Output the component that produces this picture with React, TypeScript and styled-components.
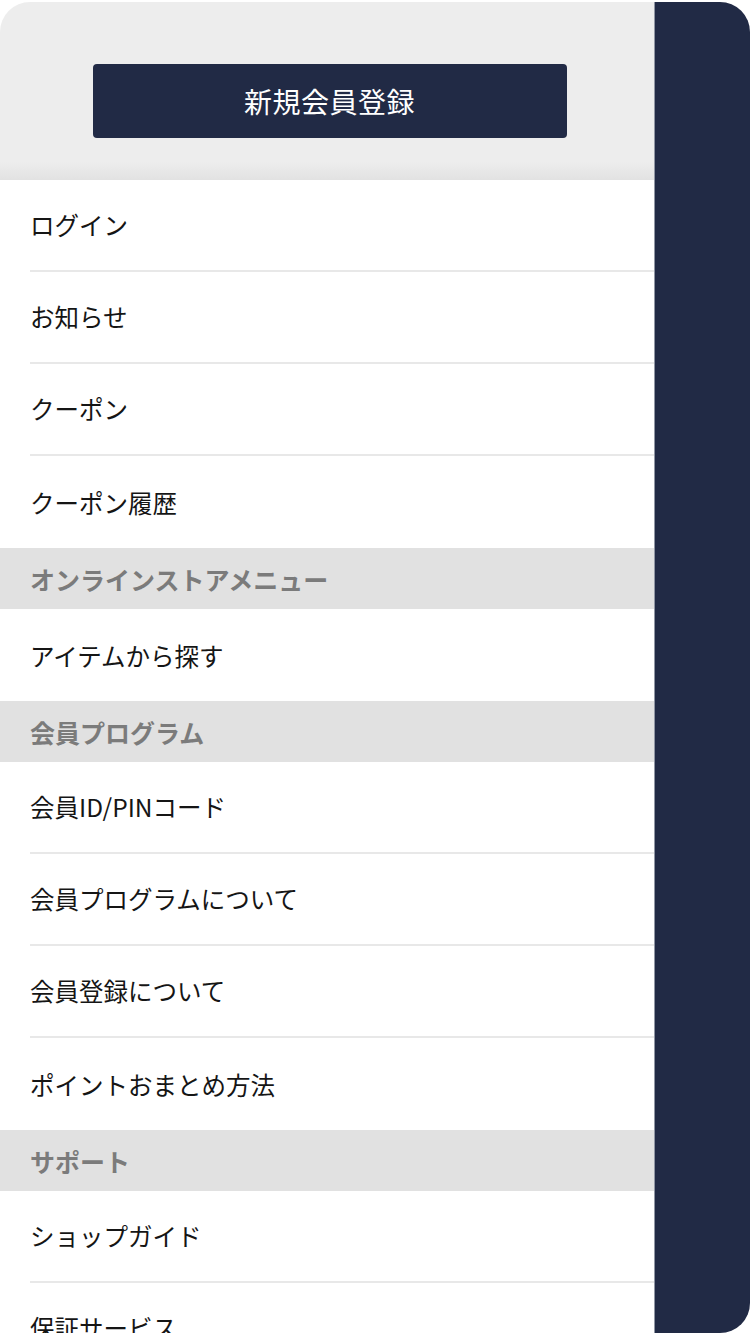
import React from 'react';
import styled, { createGlobalStyle } from 'styled-components';

const GlobalStyle = createGlobalStyle`
  html, body {
    margin: 0;
    padding: 0;
    background: #ffffff;
  }
  body {
    font-family: 'Noto Sans CJK JP', 'Noto Sans', sans-serif;
  }
`;

const Frame = styled.div`
  display: flex;
  margin-top: 2px;
  height: 1331px;
  border-radius: 30px;
  overflow: hidden;
`;

const Drawer = styled.nav`
  width: 654px;
  display: flex;
  flex-direction: column;
  background: #ffffff;
  overflow: hidden;
`;

const Backdrop = styled.div`
  flex: 1;
  background: #212a45;
  border-left: 1px solid #9096a4;
`;

const Header = styled.div`
  height: 178px;
  flex-shrink: 0;
  display: flex;
  justify-content: center;
  padding-top: 62px;
  box-sizing: border-box;
  background: linear-gradient(to bottom, #ededed 0, #ededed 160px, #e2e2e2 178px);
`;

const RegisterButton = styled.button`
  width: 474px;
  height: 74px;
  margin-left: 5px;
  border: none;
  border-radius: 4px;
  background: #212a45;
  color: #ffffff;
  font-family: 'Noto Sans CJK JP', sans-serif;
  font-size: 28px;
  font-weight: 400;
  letter-spacing: 0.5px;
  cursor: pointer;
`;

const MenuItem = styled.a<{ $divider?: boolean }>`
  display: flex;
  align-items: center;
  height: 92px;
  flex-shrink: 0;
  margin-left: 30px;
  box-sizing: border-box;
  border-bottom: ${({ $divider }) => ($divider ? '2px solid #e8e8e8' : 'none')};
  color: #151515;
  font-size: 24.5px;
  text-decoration: none;
  padding-bottom: ${({ $divider }) => ($divider ? '2px' : '0')};
`;

const SectionTitle = styled.div`
  display: flex;
  align-items: center;
  height: 61px;
  flex-shrink: 0;
  padding-left: 30px;
  background: #e1e1e1;
  color: #7b7b7b;
  font-size: 25px;
  font-weight: 700;
`;

type Entry = { kind: 'item'; label: string; divider: boolean } | { kind: 'section'; label: string };

const menu: Entry[] = [
  { kind: 'item', label: 'ログイン', divider: true },
  { kind: 'item', label: 'お知らせ', divider: true },
  { kind: 'item', label: 'クーポン', divider: true },
  { kind: 'item', label: 'クーポン履歴', divider: false },
  { kind: 'section', label: 'オンラインストアメニュー' },
  { kind: 'item', label: 'アイテムから探す', divider: false },
  { kind: 'section', label: '会員プログラム' },
  { kind: 'item', label: '会員ID/PINコード', divider: true },
  { kind: 'item', label: '会員プログラムについて', divider: true },
  { kind: 'item', label: '会員登録について', divider: true },
  { kind: 'item', label: 'ポイントおまとめ方法', divider: false },
  { kind: 'section', label: 'サポート' },
  { kind: 'item', label: 'ショップガイド', divider: true },
  { kind: 'item', label: '保証サービス', divider: true },
];

const App: React.FC = () => {
  return (
    <>
      <GlobalStyle />
      <Frame>
        <Drawer>
          <Header>
            <RegisterButton>新規会員登録</RegisterButton>
          </Header>
          {menu.map((entry, index) =>
            entry.kind === 'section' ? (
              <SectionTitle key={index}>{entry.label}</SectionTitle>
            ) : (
              <MenuItem key={index} href="#" $divider={entry.divider}>
                {entry.label}
              </MenuItem>
            )
          )}
        </Drawer>
        <Backdrop />
      </Frame>
    </>
  );
};

export default App;
